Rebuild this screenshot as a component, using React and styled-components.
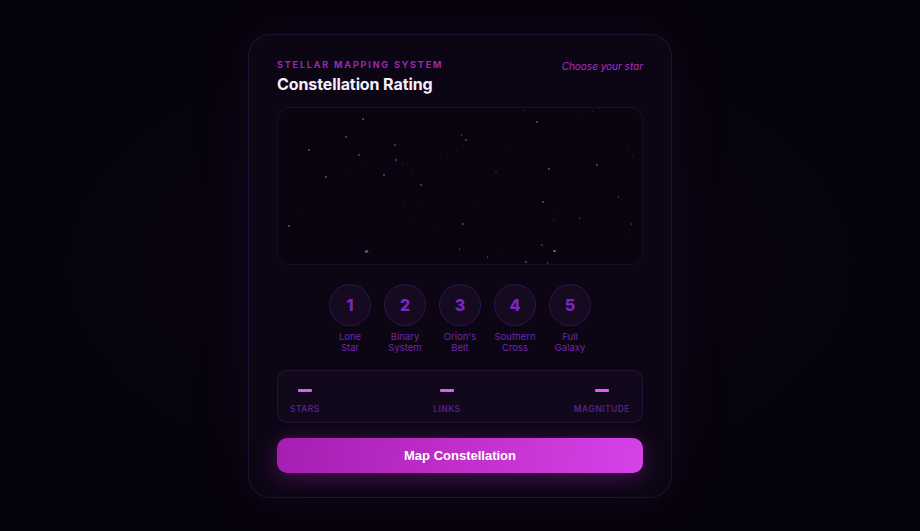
import React from "react";
import styled, { createGlobalStyle } from "styled-components";

const Global = createGlobalStyle`
  html, body { margin: 0; padding: 0; background: #07030c; }
  body { font-family: Inter, "Noto Sans", sans-serif; }
  * { box-sizing: border-box; }
`;

const Page = styled.div`
  min-height: 100vh;
  display: flex;
  align-items: center;
  justify-content: center;
  background: radial-gradient(ellipse at center, #0b0512 0%, #07030c 60%);
`;

const Card = styled.div`
  width: 424px;
  padding: 24px 28px;
  border-radius: 22px;
  background: #0c0614;
  border: 1px solid rgba(168, 85, 247, 0.14);
  box-shadow: 0 0 60px rgba(88, 28, 135, 0.12);
  display: flex;
  flex-direction: column;
`;

const Header = styled.div`
  display: flex;
  justify-content: space-between;
  align-items: flex-start;
  margin-bottom: 12px;
`;

const TitleBlock = styled.div`
  display: flex;
  flex-direction: column;
  gap: 3px;
`;

const Eyebrow = styled.div`
  font-size: 9px;
  line-height: 12px;
  font-weight: 700;
  letter-spacing: 1.85px;
  color: #9d27b0;
  text-transform: uppercase;
`;

const Title = styled.h1`
  margin: 0;
  font-size: 16px;
  line-height: 21px;
  font-weight: 700;
  letter-spacing: -0.1px;
  color: #f6eefc;
`;

const Hint = styled.div`
  font-size: 10px;
  line-height: 13px;
  font-style: italic;
  color: #b52ac4;
  margin-top: 1px;
`;

const Sky = styled.div`
  position: relative;
  height: 158px;
  border-radius: 12px;
  background: #0a0411;
  border: 1px solid rgba(168, 85, 247, 0.1);
  overflow: hidden;
`;

const Star = styled.span`
  position: absolute;
  border-radius: 50%;
  background: #c790ea;
`;

const Ratings = styled.div`
  display: flex;
  justify-content: center;
  gap: 13px;
  margin-top: 19px;
`;

const RatingItem = styled.button`
  all: unset;
  width: 42px;
  display: flex;
  flex-direction: column;
  align-items: center;
  cursor: pointer;
`;

const Circle = styled.div`
  width: 42px;
  height: 42px;
  border-radius: 50%;
  background: #150a20;
  border: 1px solid rgba(147, 51, 234, 0.22);
  display: flex;
  align-items: center;
  justify-content: center;
  font-size: 16px;
  font-weight: 800;
  color: #7a26c4;
`;

const RatingLabel = styled.div`
  margin-top: 5px;
  width: 60px;
  text-align: center;
  font-size: 9.5px;
  line-height: 11px;
  color: #6f25b3;
`;

const Stats = styled.div`
  margin-top: 17px;
  height: 53px;
  border-radius: 10px;
  background: #12081c;
  border: 1px solid rgba(168, 85, 247, 0.14);
  display: flex;
  justify-content: space-between;
  align-items: flex-start;
  padding: 18px 12px 0;
`;

const Stat = styled.div`
  display: flex;
  flex-direction: column;
  align-items: center;
  gap: 12px;
`;

const Dash = styled.div`
  width: 14px;
  height: 3px;
  border-radius: 1px;
  background: #df5ef2;
`;

const StatLabel = styled.div`
  font-size: 8.5px;
  line-height: 10px;
  font-weight: 500;
  letter-spacing: 0.5px;
  color: #5f2496;
`;

const MapButton = styled.button`
  margin-top: 15px;
  height: 35px;
  border: none;
  border-radius: 10px;
  background: linear-gradient(100deg, #a51eb3 0%, #c02fca 50%, #d543e9 100%);
  color: #ffffff;
  font-family: "Liberation Sans", Arial, sans-serif;
  font-size: 13px;
  font-weight: 700;
  cursor: pointer;
  box-shadow: 0 4px 22px rgba(192, 38, 211, 0.35);
`;

const starPts = [
  [260, 57, 2, 0.5], [210, 112, 2, 0.45], [98, 152, 2, 0.5], [248, 167, 2, 0.45],
  [150, 231, 2, 0.5], [357, 135, 2, 0.4], [360, 180, 2, 0.45], [380, 192, 1.5, 0.4],
  [325, 226, 2, 0.45], [435, 256, 2, 0.45], [557, 106, 1.5, 0.4], [570, 120, 2, 0.45],
  [783, 68, 2, 0.45], [746, 33, 1.5, 0.35], [820, 207, 2, 0.5], [963, 197, 2, 0.5],
  [800, 307, 2, 0.45], [833, 360, 1.5, 0.4], [911, 355, 1.5, 0.35], [1027, 292, 1.5, 0.35],
  [1066, 373, 1.5, 0.35], [1070, 170, 1, 0.3], [1058, 152, 1, 0.25], [562, 373, 2, 0.45],
  [40, 380, 2, 0.5], [272, 456, 2.5, 0.5], [835, 455, 2.5, 0.6], [750, 487, 2, 0.5],
  [815, 491, 1.5, 0.4], [551, 448, 1.5, 0.35], [635, 473, 1.5, 0.35], [660, 219, 1.5, 0.3],
  [540, 153, 1, 0.25], [493, 175, 1, 0.25], [410, 217, 1, 0.25], [383, 315, 1.5, 0.3],
  [225, 228, 1, 0.2], [62, 340, 1, 0.2], [487, 385, 1, 0.25], [598, 315, 1, 0.2],
  [430, 305, 1, 0.2], [798, 437, 1.5, 0.3], [950, 36, 1, 0.25], [917, 42, 1, 0.2],
  [30, 45, 1, 0.25], [848, 337, 1, 0.25], [1058, 403, 1, 0.2], [678, 466, 1, 0.25],
  [410, 367, 1, 0.2], [280, 459, 1.5, 0.35], [265, 186, 1, 0.18], [700, 140, 1, 0.18],
];

const ratings = [
  ["1", "Lone", "Star"],
  ["2", "Binary", "System"],
  ["3", "Orion's", "Belt"],
  ["4", "Southern", "Cross"],
  ["5", "Full", "Galaxy"],
];

const stats = ["STARS", "LINKS", "MAGNITUDE"];

export default function App() {
  return (
    <>
      <Global />
      <Page>
        <Card>
          <Header>
            <TitleBlock>
              <Eyebrow>Stellar Mapping System</Eyebrow>
              <Title>Constellation Rating</Title>
            </TitleBlock>
            <Hint>Choose your star</Hint>
          </Header>
          <Sky>
            {starPts.map(([zx, zy, s, o], i) => (
              <Star
                key={i}
                style={{
                  left: (zx - 3) / 3 - 1 - s / 2,
                  top: (zy - 21) / 3 - 1 - s / 2,
                  width: s,
                  height: s,
                  opacity: o,
                }}
              />
            ))}
          </Sky>
          <Ratings>
            {ratings.map(([n, a, b]) => (
              <RatingItem key={n}>
                <Circle>{n}</Circle>
                <RatingLabel>
                  {a}
                  <br />
                  {b}
                </RatingLabel>
              </RatingItem>
            ))}
          </Ratings>
          <Stats>
            {stats.map((s) => (
              <Stat key={s}>
                <Dash />
                <StatLabel>{s}</StatLabel>
              </Stat>
            ))}
          </Stats>
          <MapButton>Map Constellation</MapButton>
        </Card>
      </Page>
    </>
  );
}
